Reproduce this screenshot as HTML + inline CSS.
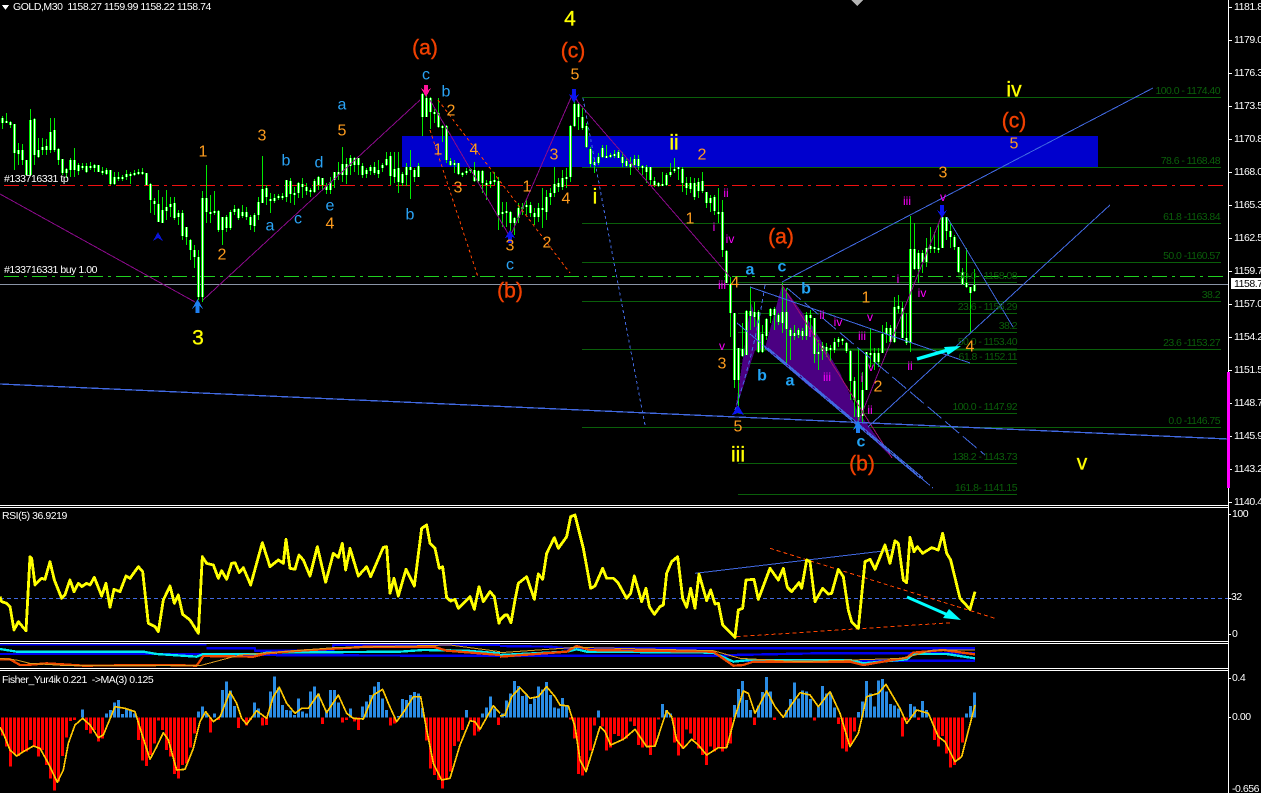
<!DOCTYPE html>
<html><head><meta charset="utf-8"><style>
html,body{margin:0;padding:0;background:#000;width:1261px;height:793px;overflow:hidden}
svg{display:block}
text{font-family:"Liberation Sans",sans-serif;dominant-baseline:central}
.s text{font-size:10.5px;letter-spacing:-.45px;fill:#fff}
.f text{font-size:10.5px;letter-spacing:-.55px;fill:#0a5f0a;text-anchor:end}
.o text{font-size:16px;fill:#ff9d1e;text-anchor:middle}
.c text{font-size:16px;fill:#2aa3f5;text-anchor:middle}
.cb text{font-size:16px;font-weight:bold;fill:#22a4f5;text-anchor:middle}
.m text{font-size:12px;fill:#f0f;text-anchor:middle}
.y text{font-size:21px;fill:#ff0;stroke:#ff0;stroke-width:.3px;text-anchor:middle}
.r text{font-size:21px;fill:#f04000;stroke:#f04000;stroke-width:.4px;text-anchor:middle}
</style></head><body>
<svg width="1261" height="793" viewBox="0 0 1261 793" xmlns="http://www.w3.org/2000/svg" shape-rendering="crispEdges">
<defs>
<path id="bd" d="M2.5 118V123M6.5 121V123M10.5 122V125M14.5 124V153M18.5 150V154M22.5 150V160M26.5 160V175M30.5 120V175M34.5 119V155M38.5 150V157M42.5 147V150M46.5 146V150M50.5 132V150M54.5 130V150M58.5 149V160M62.5 159V173M66.5 169V173M70.5 160V170M74.5 160V170M78.5 165V171M82.5 166V168M86.5 166V172M90.5 166V168M94.5 165V168M98.5 165V172M102.5 171V173M106.5 170V174M110.5 170V184M114.5 177V184M118.5 177V179M122.5 177V179M126.5 174V177M130.5 174V176M134.5 173V175M138.5 172V174M142.5 172V174M146.5 173V185M150.5 184V200M154.5 201V204M158.5 204V222M162.5 210V223M166.5 207V211M170.5 204V207M174.5 203V218M178.5 213V217M182.5 213V236M186.5 227V237M190.5 240V250M194.5 250V257M198.5 257V297M202.5 198V297M206.5 198V212M210.5 212V214M214.5 211V213M218.5 211V230M222.5 217V230M226.5 217V228M230.5 212V228M234.5 209V212M238.5 209V218M242.5 212V216M246.5 212V217M250.5 217V225M254.5 215V226M258.5 202V215M262.5 189V203M266.5 188V197M270.5 199V201M274.5 198V201M278.5 196V198M282.5 196V198M286.5 180V197M290.5 181V194M294.5 193V195M298.5 183V193M302.5 184V187M306.5 187V191M310.5 190V192M314.5 181V192M318.5 177V185M322.5 178V185M326.5 186V190M330.5 182V190M334.5 172V180M338.5 172V175M342.5 164V175M346.5 164V175M350.5 158V166M354.5 158V165M358.5 158V165M362.5 166V175M366.5 170V174M370.5 167V171M374.5 167V173M378.5 170V174M382.5 165V168M386.5 159V165M390.5 156V176M394.5 169V177M398.5 168V182M402.5 174V183M406.5 167V175M410.5 167V170M414.5 170V177M418.5 166V177M422.5 94V117M426.5 98V117M430.5 98V112M434.5 112V114M438.5 113V127M442.5 126V128M446.5 126V160M450.5 161V165M454.5 163V165M458.5 163V174M462.5 173V175M466.5 171V173M470.5 169V171M474.5 170V181M478.5 171V181M482.5 171V183M486.5 183V185M490.5 181V184M494.5 180V182M498.5 181V215M502.5 212V214M506.5 211V213M510.5 212V223M514.5 218V223M518.5 208V218M522.5 207V209M526.5 205V207M530.5 205V213M534.5 213V217M538.5 208V217M542.5 208V210M546.5 197V212M550.5 193V197M554.5 184V193M558.5 183V187M562.5 178V187M566.5 177V179M570.5 126V177M574.5 104V126M578.5 104V117M582.5 117V128M586.5 126V147M590.5 149V164M594.5 162V165M598.5 157V163M602.5 148V157M606.5 156V158M610.5 155V157M614.5 154V156M618.5 152V158M622.5 157V163M626.5 161V166M630.5 164V167M634.5 159V165M638.5 159V166M642.5 166V168M646.5 167V172M650.5 167V180M654.5 181V185M658.5 183V186M662.5 184V186M666.5 175V185M670.5 172V175M674.5 169V171M678.5 167V169M682.5 169V183M686.5 183V188M690.5 183V189M694.5 183V197M698.5 182V191M702.5 181V191M706.5 192V203M710.5 198V203M714.5 197V211M718.5 212V214M722.5 212V250M726.5 251V283M730.5 284V313M734.5 313V380M738.5 348V380M742.5 349V356M746.5 311V355M750.5 311V316M754.5 312V317M758.5 312V352M762.5 334V352M766.5 319V336M770.5 309V316M774.5 309V315M778.5 315V322M782.5 312V323M786.5 312V329M790.5 330V336M794.5 333V336M798.5 330V335M802.5 331V336M806.5 315V336M810.5 315V318M814.5 318V354M818.5 352V354M822.5 346V351M826.5 347V351M830.5 348V350M834.5 342V350M838.5 339V342M842.5 339V341M846.5 343V351M850.5 351V381M854.5 381V400M858.5 400V417M862.5 390V416M866.5 352V390M870.5 353V355M874.5 353V362M878.5 353V362M882.5 334V353M886.5 328V334M890.5 328V342M894.5 307V342M898.5 306V309M902.5 308V338M906.5 338V343M910.5 249V343M914.5 249V269M918.5 253V269M922.5 253V262M926.5 248V262M930.5 246V249M934.5 247V249M938.5 248V250M942.5 217V248M946.5 217V231M950.5 231V237M954.5 237V247M958.5 247V272M962.5 272V284M966.5 283V287M970.5 287V293M974.5 285V291"/>
</defs>
<rect width="1261" height="793" fill="#000"/>
<rect x="402" y="136" width="696" height="31" fill="#0000cd"/>
<polygon points="851,0 863,0 857,6" fill="#b4b4b4"/>

<!-- fib lines -->
<g stroke="#0a5f0a" stroke-width="1" fill="none">
<path d="M582 97.5H1221M582 167.5H1221M582 223.5H1221M582 262.5H1221M582 301.5H1221M582 349.5H1221M582 427.5H1221"/>
<path d="M738 282.5H1017M738 313.5H1017M738 332.5H1017M738 349.5H1017M738 363.5H1017M738 413.5H1017M738 463.5H1017M738 494.5H1017"/>
</g>
<path d="M738 349.5H1017" stroke="#0a6a0a" stroke-width="2" fill="none"/>

<!-- purple polygons -->
<polygon points="735,412 751,303 765,348 782,285 813,327 840,373 857,410 892,458 857,423 810,387 765,348 755,350" fill="#4b0082"/>

<!-- horizontal order lines -->
<path d="M4 185.5H1228" stroke="#f01010" stroke-dasharray="15 5 3 5" fill="none"/>
<path d="M4 276.5H1228" stroke="#20d020" stroke-width="1.4" stroke-dasharray="15 5 3 5" fill="none"/>
<path d="M0 284.5H1228" stroke="#8a94a6" fill="none"/>

<!-- candles -->
<path stroke="#00ea00" stroke-width="1" fill="none" d="M2.5 116V129M6.5 113V123M10.5 121V128M14.5 124V170M18.5 143V165M22.5 144V165M26.5 160V175M30.5 109V176M34.5 118V165M38.5 138V158M42.5 138V155M46.5 139V155M50.5 118V153M54.5 118V152M58.5 148V165M62.5 159V175M66.5 168V178M70.5 158V177M74.5 148V177M78.5 163V175M82.5 163V170M86.5 163V173M90.5 162V170M94.5 164V172M98.5 165V172M102.5 167V175M106.5 168V175M110.5 170V185M114.5 172V185M118.5 172V181M122.5 175V181M126.5 170V180M130.5 172V184M134.5 170V176M138.5 169V175M142.5 168V175M146.5 173V185M150.5 183V213M154.5 198V215M158.5 190V222M162.5 197V222M166.5 190V220M170.5 197V217M174.5 197V220M178.5 210V225M182.5 210V240M186.5 227V245M190.5 239V260M194.5 245V268M198.5 250V300M202.5 191V302M206.5 165V223M210.5 195V223M214.5 191V215M218.5 210V232M222.5 217V245M226.5 215V232M230.5 210V230M234.5 205V215M238.5 208V220M242.5 205V218M246.5 207V220M250.5 215V230M254.5 213V232M258.5 197V220M262.5 156V203M266.5 185V205M270.5 193V213M274.5 194V203M278.5 194V200M282.5 193V200M286.5 180V202M290.5 178V203M294.5 187V205M298.5 182V198M302.5 178V198M306.5 183V195M310.5 188V197M314.5 179V193M318.5 176V190M322.5 178V190M326.5 183V194M330.5 177V194M334.5 172V188M338.5 162V180M342.5 147V182M346.5 158V184M350.5 155V175M354.5 157V172M358.5 158V175M362.5 163V178M366.5 168V178M370.5 165V175M374.5 162V175M378.5 160V178M382.5 163V172M386.5 152V166M390.5 152V185M394.5 152V183M398.5 152V193M402.5 172V186M406.5 163V186M410.5 150V199M414.5 168V182M418.5 163V177M422.5 93V136M426.5 90V117M430.5 97V129M434.5 109V123M438.5 98V128M442.5 125V142M446.5 125V163M450.5 158V166M454.5 160V173M458.5 163V175M462.5 172V177M466.5 168V175M470.5 168V173M474.5 162V182M478.5 170V183M482.5 170V193M486.5 180V200M490.5 172V188M494.5 172V185M498.5 177V230M502.5 202V227M506.5 202V227M510.5 211V237M514.5 217V235M518.5 203V223M522.5 203V215M526.5 200V215M530.5 202V217M534.5 208V225M538.5 203V222M542.5 188V228M546.5 190V220M550.5 188V205M554.5 167V197M558.5 178V192M562.5 170V190M566.5 168V188M570.5 125V182M574.5 97V127M578.5 102V130M582.5 108V130M586.5 123V148M590.5 147V167M594.5 158V173M598.5 153V165M602.5 145V158M606.5 145V158M610.5 153V158M614.5 150V158M618.5 150V158M622.5 152V167M626.5 158V167M630.5 157V175M634.5 155V167M638.5 155V170M642.5 165V175M646.5 165V183M650.5 167V186M654.5 177V187M658.5 182V187M662.5 172V186M666.5 173V186M670.5 163V177M674.5 158V173M678.5 167V180M682.5 167V192M686.5 177V195M690.5 177V193M694.5 178V200M698.5 178V198M702.5 172V193M706.5 192V208M710.5 195V212M714.5 195V215M718.5 188V223M722.5 200V257M726.5 250V283M730.5 277V337M734.5 313V388M738.5 348V413M742.5 323V357M746.5 310V355M750.5 287V330M754.5 302V327M758.5 310V353M762.5 325V353M766.5 318V340M770.5 308V323M774.5 307V330M778.5 313V325M782.5 283V333M786.5 288V365M790.5 328V360M794.5 325V340M798.5 328V338M802.5 328V340M806.5 312V340M810.5 310V330M814.5 318V363M818.5 340V370M822.5 342V360M826.5 343V357M830.5 345V362M834.5 338V353M838.5 337V347M842.5 338V345M846.5 342V353M850.5 350V400M854.5 377V417M858.5 348V425M862.5 372V423M866.5 352V387M870.5 329V367M874.5 348V370M878.5 348V367M882.5 325V353M886.5 322V343M890.5 325V343M894.5 297V343M898.5 295V313M902.5 302V338M906.5 313V345M910.5 216V352M914.5 223V270M918.5 250V283M922.5 250V273M926.5 238V267M930.5 227V253M934.5 232V253M938.5 223V253M942.5 215V248M946.5 217V240M950.5 223V248M954.5 235V250M958.5 247V273M962.5 268V285M966.5 248V288M970.5 287V332M974.5 269V292"/>
<use href="#bd" fill="none" stroke="#00ea00" stroke-width="3"/>
<use href="#bd" fill="none" stroke="#fff" stroke-width="1"/>

<!-- purple wave lines -->
<g stroke="#8a0a8a" fill="none">
<polyline points="0,194 195,302"/>
<polyline points="203,300 420,100"/>
<polyline points="430,100 510,237 573,93 578,102 730,277"/>
<polyline points="858,423 942,215"/>
<polyline points="782,285 892,458" stroke="#a01070"/>
</g>

<!-- blue lines -->
<g stroke="#4169e1" fill="none" stroke-width="1">
<path d="M0 384L1228 439" stroke-width="1.3"/>
<path d="M782 282L1153 88"/>
<path d="M868 427L1110 205"/>
<path d="M750 287L970 363"/>
<path d="M947 217L1013 327"/>
<path d="M765 348L920 478M768 348L923 478"/>
<path d="M737 323L933 488" stroke-dasharray="14 3"/>
<path d="M787 288L985 455" stroke-dasharray="18 5"/>
<path d="M583 98Q600 190 645 425" stroke-dasharray="3 3"/>
<path d="M765 285Q755 350 735 410" stroke-dasharray="4 3"/>
</g>
<!-- orange dotted -->
<g stroke="#ff4500" fill="none" stroke-dasharray="3 3">
<path d="M430 130L478 277"/>
<path d="M438 100L570 273"/>
</g>

<!-- arrows markers -->
<polygon points="197.5,299 203,309 199.5,306 199.5,313 195.5,313 195.5,306 192,309" fill="#1e7ff0"/>
<polygon points="158,232 163,241 158,238 153,241" fill="#0a14d8"/>
<polygon points="426,97 431,88 428,90 428,85 424,85 424,90 421,88" fill="#ff149a"/>
<polygon points="574,103 579,94 576,96 576,89 572,89 572,96 569,94" fill="#0a14f0"/>
<polygon points="510,230 515,238 512,237 512,243 508,243 508,237 505,238" fill="#0a14f0"/>
<polygon points="738,405 744,415 738,413 732,415" fill="#0a14f0"/>
<polygon points="858,420 863,430 860,428 860,433 856,433 856,428 853,430" fill="#1e7ff0"/>
<polygon points="942,218 947,210 944,212 944,205 940,205 940,212 937,210" fill="#0a14f0"/>

<!-- cyan arrow main -->
<path d="M917 359L948 350" stroke="#0ff" stroke-width="3.5" fill="none" shape-rendering="auto"/>
<polygon points="961,346 944,347 948,355" fill="#0ff" shape-rendering="auto"/>

<!-- labels -->
<g class="s">
<polygon points="2,5 9,5 5.5,10" fill="#fff"/>
<text x="13" y="7" xml:space="preserve">GOLD,M30  1158.27 1159.99 1158.22 1158.74</text>
<text x="4" y="179">#133716331 tp</text>
<text x="4" y="270">#133716331 buy 1.00</text>
<text x="2" y="516">RSI(5) 36.9219</text>
<text x="2" y="680" xml:space="preserve">Fisher_Yur4ik 0.221  -&gt;MA(3) 0.125</text>
<text x="1234" y="7">1181.8</text><text x="1234" y="40">1179.0</text><text x="1234" y="73">1176.3</text><text x="1234" y="106">1173.5</text><text x="1234" y="139">1170.8</text><text x="1234" y="172">1168.0</text><text x="1234" y="205">1165.3</text><text x="1234" y="238">1162.5</text><text x="1234" y="271">1159.7</text><text x="1234" y="304">1157.0</text><text x="1234" y="337">1154.2</text><text x="1234" y="370">1151.5</text><text x="1234" y="403">1148.7</text><text x="1234" y="436">1145.9</text><text x="1234" y="469">1143.2</text><text x="1234" y="502">1140.4</text>
<rect x="1231" y="278" width="30" height="11" fill="#fff"/>
<text x="1234" y="284" style="fill:#000">1158.7</text>
<text x="1232" y="514">100</text><text x="1231" y="597">32</text><text x="1232" y="634">0</text>
<text x="1232" y="678">0.4</text><text x="1232" y="717">0.00</text><text x="1232" y="789">-0.656</text>
</g>
<g class="f">
<text x="1220" y="91">100.0 - 1174.40</text><text x="1220" y="161">78.6 - 1168.48</text><text x="1220" y="217">61.8 -1163.84</text><text x="1220" y="256">50.0 -1160.57</text><text x="1220" y="295">38.2</text><text x="1220" y="343">23.6 -1153.27</text><text x="1220" y="421">0.0 -1146.75</text>
<text x="1017" y="276">50.0 - 1158.08</text><text x="1017" y="307">23.6 - 1156.29</text><text x="1017" y="326">38.2</text><text x="1017" y="342">50.0 - 1153.40</text><text x="1017" y="357">61.8 - 1152.11</text><text x="1017" y="407">100.0 - 1147.92</text><text x="1017" y="457">138.2 - 1143.73</text><text x="1017" y="488">161.8- 1141.15</text>
</g>
<g class="o">
<text x="203" y="152">1</text><text x="262" y="136">3</text><text x="342" y="131">5</text><text x="222" y="255">2</text><text x="330" y="224">4</text><text x="451" y="111">2</text><text x="438" y="150">1</text><text x="474" y="150">4</text><text x="458" y="188">3</text><text x="510" y="246">3</text><text x="575" y="75">5</text><text x="554" y="155">3</text><text x="527" y="187">1</text><text x="566" y="199">4</text><text x="547" y="243">2</text><text x="702" y="155">2</text><text x="690" y="219">1</text><text x="1014" y="144">5</text><text x="943" y="173">3</text><text x="970" y="347">4</text><text x="866" y="298">1</text><text x="878" y="387">2</text><text x="722" y="364">3</text><text x="738" y="427">5</text><text x="735" y="283">4</text>
</g>
<g class="c">
<text x="342" y="105">a</text><text x="286" y="161">b</text><text x="319" y="163">d</text><text x="298" y="219">c</text><text x="330" y="206">e</text><text x="270" y="226">a</text><text x="410" y="215">b</text><text x="426" y="75">c</text><text x="446" y="92">b</text><text x="510" y="265">c</text>
</g>
<g class="cb">
<text x="750" y="270">a</text><text x="782" y="267">c</text><text x="806" y="289">b</text><text x="762" y="376">b</text><text x="790" y="381">a</text><text x="861" y="442">c</text>
</g>
<g class="m">
<text x="726" y="193">ii</text><text x="714" y="227">i</text><text x="730" y="239">iv</text><text x="722" y="285">iii</text><text x="722" y="346">v</text><text x="822" y="315">ii</text><text x="810" y="333">i</text><text x="838" y="322">iv</text><text x="827" y="377">iii</text><text x="862" y="336">iii</text><text x="870" y="317">v</text><text x="871" y="367">v</text><text x="862" y="378">i</text><text x="870" y="410">ii</text><text x="910" y="366">ii</text><text x="898" y="279">i</text><text x="922" y="293">iv</text><text x="907" y="201">iii</text><text x="943" y="197">v</text>
</g>
<g class="y">
<text x="570" y="19">4</text><text x="198" y="338">3</text><text x="1014" y="90">iv</text><text x="1082" y="463">v</text><text x="674" y="143">ii</text><text x="595" y="197">i</text><text x="738" y="455">iii</text>
</g>
<g class="r">
<text x="425" y="48">(a)</text><text x="573" y="51">(c)</text><text x="510" y="291">(b)</text><text x="781" y="237">(a)</text><text x="862" y="464">(b)</text><text x="1014" y="121">(c)</text>
</g>

<!-- RSI pane -->
<path d="M0 598.5H1228" stroke="#4169e1" stroke-dasharray="4 3" fill="none"/>
<g transform="translate(500,500) scale(.33333)" fill="none">
<polyline stroke="#4169e1" stroke-width="3" points="585,220 1175,150"/>
<polyline stroke="#ff4500" stroke-width="3" stroke-dasharray="12 9" points="810,145 1485,355"/>
<polyline stroke="#ff4500" stroke-width="3" stroke-dasharray="12 9" points="710,410 1355,368"/>
</g>
<g transform="translate(0,500) scale(.33333)" fill="none" stroke="#ff0" stroke-width="8.5" stroke-linejoin="round">
<polyline points="0,290 5,305 20,310 30,320 42,390 55,365 78,392 90,170 95,175 105,255 125,235 135,238 150,185 163,240 185,295 195,285 210,240 222,275 235,250 245,260 260,250 270,255 283,232 305,288 318,250 330,322 342,268 360,275 378,228 390,235 415,200 428,215 445,370 465,380 475,395 490,300 510,258 523,310 535,285 548,343 570,360 595,400 607,170 620,190 640,195 655,235 665,212 680,238 695,190 705,188 718,218 730,203 752,255 787,128 810,200 835,180 850,190 858,118 870,205 885,208 897,165 910,180 930,228 952,140 977,247 1000,160 1015,172 1027,130 1037,210 1050,145 1075,228 1100,200 1112,230 1150,142 1160,140 1170,280 1182,235 1195,288 1218,208 1243,258 1265,85 1280,75 1290,130 1305,145 1318,205 1328,200 1340,293 1352,303 1365,298 1375,325 1410,290 1423,328 1437,260 1450,305 1470,275 1483,290 1497,370 1500,360"/>
</g>
<g transform="translate(500,500) scale(.33333)" fill="none" stroke="#ff0" stroke-width="8.5" stroke-linejoin="round">
<polyline points="0,360 15,345 22,345 33,368 45,300 55,250 80,230 103,298 115,222 128,238 140,160 163,113 175,145 200,110 212,50 225,45 250,145 272,265 285,258 308,205 320,235 340,235 355,250 380,295 392,280 403,228 425,305 438,265 448,320 463,343 480,320 490,315 500,220 515,185 533,170 548,295 560,322 572,265 585,325 597,222 620,302 632,270 645,312 655,310 668,375 705,412 715,330 728,325 738,240 762,238 775,298 810,205 835,240 850,205 862,262 875,275 897,248 905,265 920,180 930,185 945,305 968,265 985,282 995,280 1015,208 1030,230 1045,330 1055,365 1075,385 1095,185 1110,178 1125,208 1155,135 1170,190 1185,122 1195,130 1210,240 1220,248 1230,112 1242,155 1252,140 1268,160 1295,143 1315,150 1328,100 1340,160 1352,180 1380,295 1410,328 1425,275"/>
</g>
<path d="M907 597L948 615" stroke="#0ff" stroke-width="3" fill="none" shape-rendering="auto"/>
<polygon points="961,620 943,618 949,609" fill="#0ff" shape-rendering="auto"/>

<!-- middle pane -->
<g transform="translate(0,500) scale(.33333)" fill="none" stroke-linejoin="round">
<polyline stroke="#0000f0" stroke-width="7" points="0,433 620,433"/>
<polyline stroke="#0000f0" stroke-width="7" points="620,445 765,445 765,452 1000,452 1000,435 1500,435"/>
<polyline stroke="#0000f0" stroke-width="7" points="0,462 590,462 765,465 1500,468"/>
<polyline stroke="#00e8f0" stroke-width="7" points="0,447 50,455 430,455 470,462 590,470 610,462 780,462 800,458 1200,455 1270,450 1400,452 1500,460"/>
<polyline stroke="#f04800" stroke-width="7" points="0,478 30,478 60,495 80,495 140,490 250,497 500,495 590,497 610,468 760,470 800,460 900,452 1100,440 1300,440 1340,452 1500,465"/>
<polyline stroke="#d89a20" stroke-width="3" points="0,475 50,480 90,490 200,497 600,497 720,465 1000,443 1350,435 1500,455"/>
</g>
<g transform="translate(500,500) scale(.33333)" fill="none" stroke-linejoin="round">
<polyline stroke="#0000f0" stroke-width="7" points="0,438 150,440 200,445 1425,445"/>
<polyline stroke="#0000f0" stroke-width="7" points="0,467 660,467 700,465 945,460 1425,460"/>
<polyline stroke="#0000f0" stroke-width="7" points="720,482 1425,482"/>
<polyline stroke="#00e8f0" stroke-width="7" points="0,465 200,455 230,448 260,455 640,458 700,485 750,480 1050,480 1090,490 1220,478 1240,462 1340,462 1425,475"/>
<polyline stroke="#f04800" stroke-width="7" points="0,470 200,455 230,438 270,450 640,455 700,497 730,495 760,485 1050,485 1090,495 1220,473 1240,458 1330,450 1425,463"/>
<polyline stroke="#d89a20" stroke-width="3" points="0,458 230,442 640,452 720,475 900,485 1210,475 1300,450 1425,450"/>
</g>

<!-- fisher -->
<g transform="translate(0,500) scale(.33333)" fill="none" stroke-width="9">
<path stroke="#2a8ce4" d="M248 653V628M320 653V640M332 653V630M344 653V608M356 653V600M368 653V642M380 653V625M392 653V632M404 653V640M596 653V635M608 653V620M620 653V640M644 653V640M668 653V570M680 653V545M692 653V572M704 653V618M764 653V608M776 653V625M812 653V575M824 653V530M836 653V562M848 653V615M860 653V630M872 653V632M884 653V645M896 653V595M908 653V635M920 653V640M932 653V575M944 653V560M956 653V580M980 653V630M992 653V570M1004 653V570M1016 653V608M1052 653V625M1088 653V620M1100 653V605M1112 653V585M1124 653V560M1136 653V546M1148 653V595M1160 653V630M1196 653V648M1208 653V597M1220 653V600M1232 653V585M1244 653V576M1256 653V580M1268 653V624M1400 653V630M1448 653V640M1460 653V622M1472 653V590M1484 653V625"/>
<path stroke="#f00" d="M8 653V707M20 653V740M32 653V800M44 653V760M56 653V768M68 653V755M80 653V755M92 653V720M104 653V740M116 653V770M128 653V750M140 653V795M152 653V835M164 653V872M176 653V845M188 653V768M200 653V712M212 653V663M224 653V660M260 653V690M272 653V700M284 653V690M296 653V725M308 653V715M416 653V720M428 653V782M440 653V798M452 653V765M464 653V730M476 653V662M488 653V690M500 653V750M512 653V770M524 653V822M536 653V836M548 653V795M560 653V790M572 653V742M584 653V700M632 653V698M656 653V660M716 653V684M740 653V677M752 653V660M788 653V677M800 653V675M968 653V672M1028 653V668M1040 653V660M1064 653V665M1076 653V690M1172 653V677M1184 653V670M1280 653V722M1292 653V805M1304 653V825M1316 653V840M1328 653V866M1340 653V840M1352 653V815M1364 653V738M1376 653V725M1388 653V690M1412 653V660M1424 653V707M1436 653V695M1496 653V675"/>
<polyline stroke="#ffc800" stroke-width="5" stroke-linejoin="round" points="0,682 10,700 30,750 50,768 70,755 100,738 120,745 145,790 172,847 190,810 205,730 225,675 248,655 270,675 295,713 310,705 345,620 375,625 405,635 425,700 450,778 470,740 490,698 505,720 530,810 555,808 580,745 600,665 617,635 640,665 660,650 690,576 710,610 725,655 740,673 770,632 800,655 820,590 838,562 860,610 885,640 905,625 925,625 955,582 980,638 1015,585 1040,640 1060,655 1090,657 1120,585 1148,568 1165,610 1190,665 1215,630 1240,590 1262,590 1280,690 1300,790 1325,840 1350,835 1380,735 1410,662 1425,665 1440,688 1480,617 1500,640"/>
</g>
<g transform="translate(500,500) scale(.33333)" fill="none" stroke-width="9">
<path stroke="#2a8ce4" d="M8 653V640M20 653V602M32 653V580M44 653V543M56 653V558M68 653V588M80 653V585M92 653V612M104 653V595M116 653V560M128 653V568M140 653V546M152 653V585M164 653V622M176 653V625M188 653V594M200 653V615M296 653V632M488 653V612M500 653V630M512 653V640M704 653V615M716 653V567M728 653V543M740 653V600M752 653V630M776 653V617M788 653V576M800 653V531M812 653V575M860 653V630M872 653V597M884 653V547M896 653V595M908 653V572M920 653V575M932 653V597M956 653V620M968 653V558M980 653V580M992 653V578M1004 653V622M1076 653V636M1088 653V605M1100 653V543M1112 653V580M1124 653V620M1136 653V542M1148 653V537M1160 653V575M1172 653V612M1184 653V617M1196 653V625M1232 653V612M1244 653V620M1268 653V603M1280 653V630M1400 653V640M1412 653V618M1424 653V578"/>
<path stroke="#f00" d="M212 653V658M224 653V716M236 653V822M248 653V826M260 653V810M272 653V752M284 653V676M308 653V680M320 653V752M332 653V742M344 653V702M356 653V708M368 653V722M380 653V716M392 653V665M404 653V678M416 653V735M428 653V742M440 653V738M452 653V765M464 653V738M476 653V658M524 653V728M536 653V767M548 653V745M560 653V688M572 653V700M584 653V720M596 653V745M608 653V765M620 653V795M632 653V740M644 653V755M656 653V742M668 653V755M680 653V742M692 653V730M764 653V675M824 653V660M944 653V662M1016 653V672M1028 653V745M1040 653V755M1052 653V735M1064 653V695M1208 653V710M1220 653V660M1256 653V660M1304 653V720M1316 653V740M1328 653V708M1340 653V760M1352 653V803M1364 653V795M1376 653V780M1388 653V727"/>
<polyline stroke="#ffc800" stroke-width="5" stroke-linejoin="round" points="0,648 15,645 35,590 60,563 90,595 115,590 140,560 165,590 180,615 205,618 225,680 240,780 258,815 280,745 300,680 315,695 332,735 370,718 405,688 440,740 465,738 500,632 515,650 530,720 550,745 575,718 595,735 620,765 655,743 680,743 705,650 730,573 745,580 765,640 800,573 825,620 850,652 870,620 900,578 930,585 955,620 990,575 1020,640 1050,740 1075,700 1100,590 1135,580 1158,553 1200,625 1220,670 1250,630 1285,640 1315,710 1335,725 1365,785 1385,770 1425,615"/>
</g>

<!-- separators and axis -->
<path d="M0 505.5H1228M0 507.5H1228M0 641.5H1228M0 643.5H1228M0 668.5H1228M0 670.5H1228" stroke="#fff" fill="none"/>
<path d="M1228.5 0V793" stroke="#fff" fill="none"/>
<path d="M1229 7.5h3M1229 40.5h3M1229 73.5h3M1229 106.5h3M1229 139.5h3M1229 172.5h3M1229 205.5h3M1229 238.5h3M1229 271.5h3M1229 304.5h3M1229 337.5h3M1229 370.5h3M1229 403.5h3M1229 436.5h3M1229 469.5h3M1229 502.5h3M1229 514.5h2M1229 598.5h2M1229 634.5h2M1229 678.5h2M1229 717.5h2" stroke="#fff" fill="none"/>
<rect x="1227" y="372" width="3" height="116" fill="#f0f"/>
</svg>
</body></html>
